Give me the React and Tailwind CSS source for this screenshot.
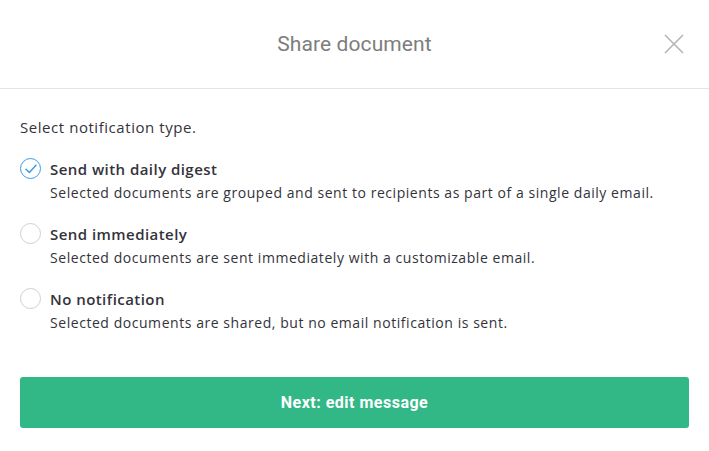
import React, { useState } from "react";

const options = [
  {
    id: "digest",
    title: "Send with daily digest",
    desc: "Selected documents are grouped and sent to recipients as part of a single daily email.",
  },
  {
    id: "immediately",
    title: "Send immediately",
    desc: "Selected documents are sent immediately with a customizable email.",
  },
  {
    id: "none",
    title: "No notification",
    desc: "Selected documents are shared, but no email notification is sent.",
  },
];

const Radio = ({ checked }) => (
  <span
    className={`mt-[1px] flex h-[21px] w-[21px] shrink-0 items-center justify-center rounded-full border ${
      checked ? "border-[#3d9be9]" : "border-[#cfcfcf]"
    }`}
  >
    {checked && (
      <svg width="12" height="10" viewBox="0 0 12 10" fill="none">
        <path d="M1 5.2 L4.3 8.4 L11 1.2" stroke="#3d9be9" strokeWidth="1.5" strokeLinecap="round" strokeLinejoin="round" />
      </svg>
    )}
  </span>
);

export default function App() {
  const [selected, setSelected] = useState("digest");

  return (
    <div className="h-[451px] w-[709px] bg-white font-['Open_Sans',sans-serif] text-[#33333b]">
      {/* header */}
      <div className="relative flex h-[89px] items-center justify-center border-b border-[#e3e3e3]">
        <h1 className="pt-[2px] font-['Roboto',sans-serif] text-[21px] tracking-[0.1px] text-[#7d7d7d]">Share document</h1>
        <button className="absolute right-[25px] top-[34px] p-0">
          <svg width="20" height="20" viewBox="0 0 20 20">
            <path d="M1 1 L19 19 M19 1 L1 19" stroke="#b5b5b5" strokeWidth="1.6" />
          </svg>
        </button>
      </div>

      <div className="px-5 pt-[28px]">
        <p className="text-[15px] leading-5 tracking-[0.55px]">Select notification type.</p>

        <div className="mt-[20px] flex flex-col gap-[17px]">
          {options.map((o) => (
            <label key={o.id} className="flex cursor-pointer gap-[9px]" onClick={() => setSelected(o.id)}>
              <Radio checked={selected === o.id} />
              <div>
                <div className="text-[15px] font-semibold leading-6 tracking-[0.45px]">{o.title}</div>
                <div className="text-[14px] leading-6 tracking-[0.55px]">{o.desc}</div>
              </div>
            </label>
          ))}
        </div>

        <button className="mt-[42px] flex h-[51px] w-full items-center justify-center rounded-[3px] bg-[#32b886] font-['Roboto',sans-serif] text-[16px] font-bold tracking-[0.5px] text-white">
          Next: edit message
        </button>
      </div>
    </div>
  );
}
